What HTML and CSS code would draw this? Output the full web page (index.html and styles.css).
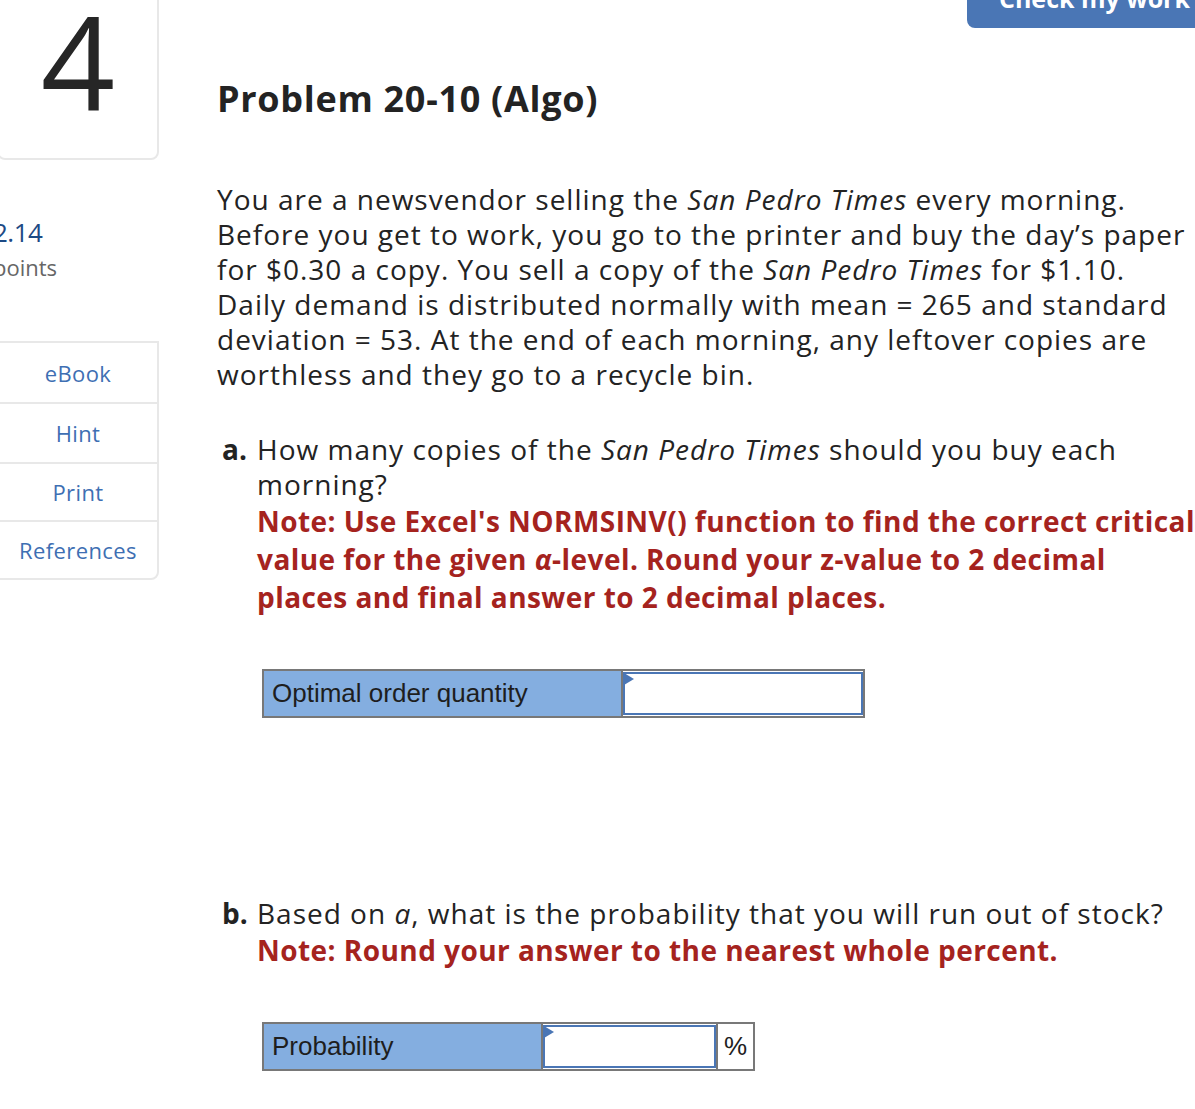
FILE: index.html
```html
<!DOCTYPE html>
<html>
<head>
<meta charset="utf-8">
<link rel="stylesheet" href="styles.css">
</head>
<body>
<div class="page">
  <aside class="sidebar">
    <div class="qnum-card"><span class="qnum">4</span></div>
    <div class="score">
      <div class="score-value">2.14</div>
      <div class="score-label">points</div>
    </div>
    <ul class="tools">
      <li class="tool">eBook</li>
      <li class="tool">Hint</li>
      <li class="tool">Print</li>
      <li class="tool">References</li>
    </ul>
  </aside>
  <main class="main">
    <div class="topbar"><button class="check-btn">Check my work</button></div>
    <h1 class="title">Problem 20-10 (Algo)</h1>
    <p class="intro">You are a newsvendor selling the <i>San Pedro Times</i> every morning. Before you get to work, you go to the printer and buy the day’s paper for $0.30 a copy. You sell a copy of the <i>San Pedro Times</i> for $1.10. Daily demand is distributed normally with mean = 265 and standard deviation = 53. At the end of each morning, any leftover copies are worthless and they go to a recycle bin.</p>

    <section class="part part-a">
      <div class="part-row">
        <span class="part-letter">a.</span>
        <div class="part-body">
          <div class="question">How many copies of the <i>San Pedro Times</i> should you buy each morning?</div>
          <div class="note">Note: Use Excel's NORMSINV() function to find the correct critical value for the given <i class="alpha">α</i>-level. Round your z-value to 2 decimal places and final answer to 2 decimal places.</div>
        </div>
      </div>
      <table class="answer answer-a">
        <tr>
          <td class="label">Optimal order quantity</td>
          <td class="input-cell"><div class="input"><span class="flag"></span></div></td>
        </tr>
      </table>
    </section>

    <section class="part part-b">
      <div class="part-row">
        <span class="part-letter">b.</span>
        <div class="part-body">
          <div class="question">Based on <i>a</i>, what is the probability that you will run out of stock?</div>
          <div class="note note-b">Note: Round your answer to the nearest whole percent.</div>
        </div>
      </div>
      <table class="answer answer-b">
        <tr>
          <td class="label">Probability</td>
          <td class="input-cell"><div class="input"><span class="flag"></span></div></td>
          <td class="unit">%</td>
        </tr>
      </table>
    </section>
  </main>
</div>
</body>
</html>
```

FILE: styles.css
```css
* { box-sizing: border-box; }
html, body {
  margin: 0;
  padding: 0;
  background: #fff;
  overflow: hidden;
}
body {
  font-family: "Open Sans", Lato, sans-serif;
  color: #232323;
}
.page {
  display: flex;
  align-items: flex-start;
  width: 1195px;
  height: 1109px;
  overflow: hidden;
}
.sidebar {
  flex: 0 0 162px;
  margin-left: -3px;
  display: flex;
  flex-direction: column;
}
.qnum-card {
  height: 180px;
  margin-top: -20px;
  border: 2px solid #e8e8e8;
  border-radius: 0 0 8px 8px;
  display: flex;
  align-items: flex-start;
  justify-content: center;
  padding-top: 4px;
}
.qnum {
  font-size: 130px;
  line-height: 150px;
  color: #262626;
  font-weight: 500;
}
.score {
  margin-top: 56px;
  margin-left: -4px;
}
.score-value {
  font-size: 26px;
  line-height: 32px;
  color: #1d4a85;
  letter-spacing: -0.5px;
}
.score-label {
  font-size: 22px;
  line-height: 32px;
  margin-top: 3px;
  color: #666;
}
.tools {
  list-style: none;
  margin: 58px 0 0;
  padding: 0;
  border: 2px solid #e8e8e8;
  border-radius: 0 0 8px 0;
}
.tool {
  height: 59px;
  display: flex;
  align-items: center;
  justify-content: center;
  font-size: 22px;
  letter-spacing: 0.4px;
  color: #3e6fb3;
  border-top: 2px solid #e8e8e8;
}
.tool:first-child { border-top: none; height: 59px; }
.tool:nth-child(2) { height: 60px; }
.tool:nth-child(3) { height: 58px; }
.tool:nth-child(4) { height: 58px; }
.main {
  flex: 1 0 auto;
  width: 1010px;
  margin-left: 58px;
  position: relative;
}
.topbar {
  height: 0;
}
.check-btn {
  position: absolute;
  top: -32px;
  left: 750px;
  width: 300px;
  height: 60px;
  border: none;
  border-radius: 8px;
  background: #4a76b5;
  color: #fff;
  font-family: "Open Sans", sans-serif;
  font-weight: 700;
  font-size: 25px;
  text-align: left;
  padding: 0 0 0 32px;
}
.title {
  margin: 76px 0 0;
  font-size: 36px;
  line-height: 46px;
  letter-spacing: 0.7px;
  font-weight: 700;
  color: #232323;
}
.intro {
  margin: 60px 0 0;
  font-size: 28px;
  line-height: 35px;
  letter-spacing: 1px;
  width: 975px;
}
.part-a { margin-top: 40px; }
.part-b { margin-top: 178px; }
.part-row {
  display: flex;
  margin-left: 5px;
}
.part-letter {
  flex: 0 0 35px;
  font-size: 28px;
  line-height: 35px;
  font-weight: 700;
}
.part-body { flex: 1; }
.question {
  font-size: 28px;
  line-height: 35px;
  letter-spacing: 1px;
}
.part-a .question { width: 900px; }
.note {
  font-size: 28px;
  line-height: 38px;
  font-weight: 700;
  letter-spacing: 0.45px;
  color: #a5231e;
  width: 945px;
}
.alpha { font-weight: 700; }
.answer {
  border-collapse: collapse;
  margin-left: 45px;
  font-family: "Liberation Sans", Arial, sans-serif;
  font-size: 26px;
}
.answer-a { margin-top: 53px; }
.answer-b { margin-top: 53px; }
.answer td {
  border: 2px solid #787878;
  height: 47px;
  padding: 0;
}
.label {
  background: #84aee0;
  color: #1e1e1e;
  padding: 0 8px !important;
  vertical-align: middle;
}
.answer-a .label { width: 359px; }
.answer-b .label { width: 279px; }
.input-cell { background: #fff; }
.answer-a .input-cell { width: 242px; }
.answer-b .input-cell { width: 175px; }
.input {
  position: relative;
  height: 43px;
  border: 2px solid #4a76b5;
  background: #fff;
}
.flag {
  position: absolute;
  left: -1px;
  top: -1px;
  width: 0;
  height: 0;
  border-top: 6px solid transparent;
  border-bottom: 6px solid transparent;
  border-left: 10px solid #4a76b5;
}
.unit {
  width: 37px;
  text-align: center;
  background: #fff;
  color: #1e1e1e;
}
```
